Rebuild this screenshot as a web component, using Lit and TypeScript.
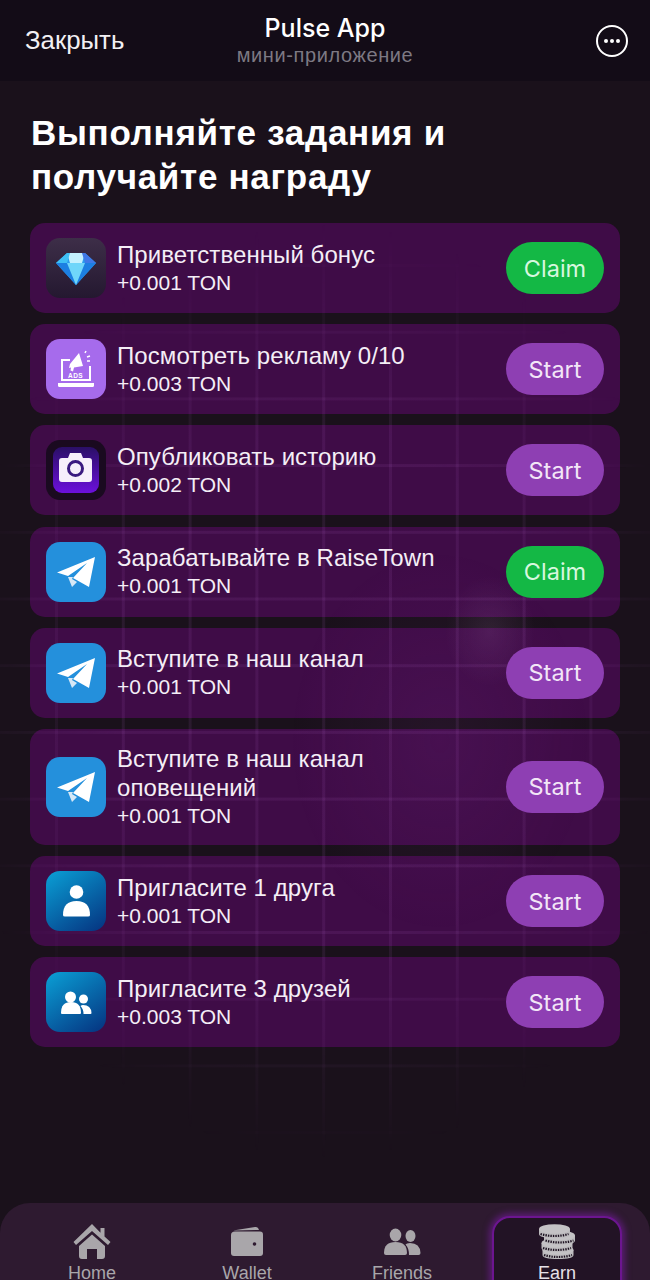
import { LitElement, html, css, svg } from 'lit';
import { customElement } from 'lit/decorators.js';

type Task = { title: string[]; reward: string; icon: string; action: 'Claim' | 'Start' };

const tasks: Task[] = [
  { title: ['Приветственный бонус'], reward: '+0.001 TON', icon: 'gem', action: 'Claim' },
  { title: ['Посмотреть рекламу 0/10'], reward: '+0.003 TON', icon: 'ads', action: 'Start' },
  { title: ['Опубликовать историю'], reward: '+0.002 TON', icon: 'camera', action: 'Start' },
  { title: ['Зарабатывайте в RaiseTown'], reward: '+0.001 TON', icon: 'telegram', action: 'Claim' },
  { title: ['Вступите в наш канал'], reward: '+0.001 TON', icon: 'telegram', action: 'Start' },
  { title: ['Вступите в наш канал', 'оповещений'], reward: '+0.001 TON', icon: 'telegram', action: 'Start' },
  { title: ['Пригласите 1 друга'], reward: '+0.001 TON', icon: 'user', action: 'Start' },
  { title: ['Пригласите 3 друзей'], reward: '+0.003 TON', icon: 'users', action: 'Start' },
];

const icons: Record<string, unknown> = {
  gem: svg`
    <path d="M21 15h18l11 10-20 22-20-22z" fill="#2a9cf0"/>
    <path d="M10 25h40L30 47z" fill="#1c7fe2"/>
    <path d="M21 25h18L30 47z" fill="#6fd6fa"/>
    <path d="M21 15h18l-3 10H24z" fill="#c4f1ff"/>
    <path d="M39 15l11 10H39l-3-10z" fill="#3f78e6"/>
    <path d="M21 15L10 25h11l3-10z" fill="#3fc0f5"/>`,
  ads: svg`
    <path d="M15 20h9v2H17v18h26V27h2v15H15z" fill="#fff"/>
    <path d="M12 44h36v2.500q0 1.500-1.500 1.500h-33q-1.500 0-1.500-1.500z" fill="#fff"/>
    <path d="M24 25l9-11 4 13-9 1.500-1 4-2.500-1 .5-3-2 .5z" fill="#fff"/>
    <path d="M39 14l1-2M41 18l3-1M41 22h3" stroke="#fff" stroke-width="1.500"/>
    <text x="29.500" y="38.500" text-anchor="middle" font-size="6.500" font-weight="700" letter-spacing=".4" fill="#fff" font-family="Liberation Sans">ADS</text>`,
  camera: svg`
    <rect x="7" y="7" width="46" height="46" rx="9" fill="url(#camBg)"/>
    <defs>
      <linearGradient id="camBg" x1="0" y1="0" x2="0" y2="1">
        <stop offset="0" stop-color="#2a0f66"/><stop offset="1" stop-color="#6c10dc"/>
      </linearGradient>
    </defs>
    <path d="M16 18h6l2-5h11l2 5h6q3 0 3 3v18q0 3-3 3H16q-3 0-3-3V21q0-3 3-3z" fill="#f6effb"/>
    <circle cx="29.500" cy="28.500" r="7" fill="none" stroke="#3a1a80" stroke-width="3"/>`,
  telegram: svg`
    <path d="M49 15L11 30.500l11 3.500 19-13-14 15 16 9z" fill="#fff"/>
    <path d="M22 35l4 10 5-5-5-3 1-2z" fill="#d6e8f6"/>`,
  user: svg`
    <circle cx="30.500" cy="21" r="6.800" fill="#fff"/>
    <path d="M17 44q0-14 13.500-14T44 44q0 1.500-2 1.500H19q-2 0-2-1.500z" fill="#fff"/>`,
  users: svg`
    <circle cx="24.500" cy="25" r="5.500" fill="#fff"/>
    <circle cx="37.500" cy="27" r="4.500" fill="#fff"/>
    <path d="M15 41q0-11 10-11t10 11q0 1-1 1H16q-1 0-1-1z" fill="#fff"/>
    <path d="M37 33q8 0 8.500 8 0 1-1 1H37.500q0-5-3-8 1-1 2.500-1z" fill="#fff"/>`,
};

const iconClass: Record<string, string> = {
  gem: 'ic-gem', ads: 'ic-ads', camera: 'ic-camera', telegram: 'ic-tg', user: 'ic-user', users: 'ic-user',
};

// one ridged coin of the stack in the Earn tab
const coin = (x: number, y: number) => svg`
  <path d="M${x - 15.500} ${y}v5q0 4 15.500 4t15.500-4v-5z" fill="#bcbabd"/>
  <path d="M${x - 14} ${y + 5}q14 4 28 0" fill="none" stroke="#1c1120" stroke-width="2.200" stroke-dasharray="1.400 1.100"/>
  <ellipse cx=${x} cy=${y} rx="15.500" ry="4.800" fill="#c4c2c5"/>`;

@customElement('app-root')
export class AppRoot extends LitElement {
  static styles = css`
    :host {
      display: block;
      width: 650px;
      height: 1280px;
      overflow: hidden;
      background: #1a111b;
      color: #fff;
      font-family: 'Liberation Sans', Arial, sans-serif;
    }
    .screen {
      position: relative;
      z-index: 0;
      height: 1280px;
      display: flex;
      flex-direction: column;
      overflow: hidden;
    }
    .grid {
      position: absolute;
      z-index: 1;
      left: 0;
      right: 0;
      top: 81px;
      bottom: 0;
      pointer-events: none;
      background-image:
        radial-gradient(ellipse 45px 55px at 490px 550px, rgba(210, 160, 220, 0.1), transparent),
        radial-gradient(ellipse 150px 190px at 440px 660px, rgba(160, 60, 180, 0.09), transparent),
        repeating-linear-gradient(90deg, transparent 0 54.500px, rgba(190, 110, 215, 0.1) 55.500px 57.500px, transparent 58.500px 66.800px),
        repeating-linear-gradient(0deg, transparent 0 12px, rgba(190, 110, 215, 0.1) 13px 15px, transparent 16px 66.700px);
      -webkit-mask-image: radial-gradient(ellipse 380px 470px at 325px 610px, #000 55%, transparent 100%);
      mask-image: radial-gradient(ellipse 380px 470px at 325px 610px, #000 55%, transparent 100%);
    }
    .head {
      position: relative;
      z-index: 2;
      height: 81px;
      flex: none;
      background: #130c17;
      display: flex;
      align-items: center;
      justify-content: space-between;
      padding: 0 22px 0 25px;
    }
    .close {
      font-size: 25.800px;
      color: #f2f0f3;
    }
    .brand {
      position: absolute;
      left: 0;
      right: 0;
      top: 13px;
      text-align: center;
    }
    .brand b {
      display: block;
      font-family: Inter, 'Liberation Sans', sans-serif;
      font-size: 25px;
      font-weight: 500;
      line-height: 30px;
    }
    .brand span {
      display: block;
      font-size: 20px;
      letter-spacing: 0.6px;
      line-height: 24px;
      color: #7d7983;
    }
    .more {
      width: 32px;
      height: 32px;
      display: block;
    }
    h1 {
      position: relative;
      z-index: 2;
      margin: 0;
      padding: 30px 30px 0 31px;
      font-size: 35px;
      line-height: 44px;
      font-weight: 700;
      letter-spacing: 0.7px;
    }
    .list {
      display: flex;
      flex-direction: column;
      gap: 11.200px;
      margin: 24px 30px 0;
      flex: 1;
    }
    .card {
      min-height: 90px;
      box-sizing: border-box;
      display: flex;
      align-items: center;
      padding: 0 16px;
      border-radius: 15px;
      background: rgba(80, 10, 90, 0.7);
    }
    .icon {
      position: relative;
      z-index: 2;
      width: 60px;
      height: 60px;
      flex: none;
      border-radius: 14px;
      display: block;
    }
    .ic-gem { background: linear-gradient(#3d2e48, #241830); }
    .ic-ads { background: #a66bec; }
    .ic-camera { background: #1a0a20; }
    .ic-tg { background: #2490dc; }
    .ic-user { background: linear-gradient(145deg, #0aa0d6, #05327f); }
    .text {
      position: relative;
      z-index: 2;
      flex: 1;
      min-width: 0;
      padding: 15px 0 15px 11px;
      font-size: 24px;
      line-height: 29px;
      letter-spacing: 0.08px;
      color: #f4eef6;
    }
    .text div { white-space: nowrap; }
    .text .reward { font-size: 21px; line-height: 28px; letter-spacing: 0; }
    .btn {
      position: relative;
      z-index: 2;
      width: 98px;
      height: 52px;
      flex: none;
      border-radius: 26px;
      display: flex;
      align-items: center;
      justify-content: center;
      font-family: Inter, 'Liberation Sans', sans-serif;
      font-size: 23.500px;
      color: #f3e6f7;
    }
    .btn.Claim { background: #14b845; color: #d8f7df; }
    .btn.Start { background: #8e3fb3; }
    .tabs {
      position: relative;
      z-index: 2;
      flex: none;
      height: 77px;
      box-sizing: border-box;
      display: grid;
      grid-template-columns: repeat(4, 130px);
      column-gap: 25px;
      padding: 13px 28px 0 27px;
      background: #2e1a30;
      border-radius: 30px 30px 0 0;
    }
    .tab {
      height: 90px;
      display: flex;
      flex-direction: column;
      align-items: center;
      padding-top: 5px;
      box-sizing: border-box;
      color: #a9a6aa;
      font-size: 18px;
      line-height: 22px;
    }
    .tab svg { width: 40px; height: 40px; display: block; flex: none; margin-bottom: 1px; }
    .tab.active {
      padding-top: 3px;
      color: #e6e1e8;
      background: #221325;
      border: 2px solid #6c1590;
      border-radius: 18px;
      box-shadow: 0 0 6px 3px rgba(118, 28, 158, 0.6);
    }
  `;

  private renderTask(t: Task) {
    return html`
      <div class="card">
        <svg class="icon ${iconClass[t.icon]}" viewBox="0 0 60 60">${icons[t.icon]}</svg>
        <div class="text">
          ${t.title.map((line) => html`<div>${line}</div>`)}
          <div class="reward">${t.reward}</div>
        </div>
        <div class="btn ${t.action}">${t.action}</div>
      </div>
    `;
  }

  render() {
    return html`
      <div class="screen">
        <div class="grid"></div>
        <div class="head">
          <span class="close">Закрыть</span>
          <div class="brand"><b>Pulse App</b><span>мини-приложение</span></div>
          <svg class="more" viewBox="0 0 32 32">
            <circle cx="16" cy="16" r="15" fill="none" stroke="#fff" stroke-width="2"/>
            <circle cx="10" cy="16" r="2" fill="#fff"/>
            <circle cx="16" cy="16" r="2" fill="#fff"/>
            <circle cx="22" cy="16" r="2" fill="#fff"/>
          </svg>
        </div>
        <h1>Выполняйте задания и<br />получайте награду</h1>
        <div class="list">${tasks.map((t) => this.renderTask(t))}</div>
        <div class="tabs">
          <div class="tab">
            <svg viewBox="0 0 40 40" fill="#a9a6aa">
              <path d="M20 3L1.500 21l2.500 3L20 10l16 14 2.500-3-6-5.600V7h-4v4.800z"/>
              <path d="M7 25L20 13.500 33 25v10q0 3-3 3h-5V28h-10v10h-5q-3 0-3-3z"/>
            </svg>
            Home
          </div>
          <div class="tab">
            <svg viewBox="0 0 40 40" fill="#a9a6aa">
              <path d="M6 9.500L28 6q3-.5 4 3z"/>
              <path d="M8 10.500h25q3 0 3 3V32q0 3-3 3H7q-3 0-3-3V14q0-3.500 4-3.500z"/>
              <circle cx="27.500" cy="23" r="1.800" fill="#2e1a30"/>
            </svg>
            Wallet
          </div>
          <div class="tab">
            <svg viewBox="0 0 40 40" fill="#a9a6aa">
              <ellipse cx="13.500" cy="14" rx="5.800" ry="6.500"/>
              <ellipse cx="28.500" cy="15" rx="5" ry="6"/>
              <path d="M2 32q0-11 11.500-11T25 32q0 2-2 2H4q-2 0-2-2z"/>
              <path d="M28 22q10 0 10.500 10 0 2-2 2H27q0-7-3.500-10.500 1-1.500 4.500-1.500z"/>
            </svg>
            Friends
          </div>
          <div class="tab active">
            <svg viewBox="0 0 40 40">
              ${coin(21, 29)}${coin(20, 22)}${coin(22.500, 14.500)}${coin(17.500, 8)}
            </svg>
            Earn
          </div>
        </div>
      </div>
    `;
  }
}
